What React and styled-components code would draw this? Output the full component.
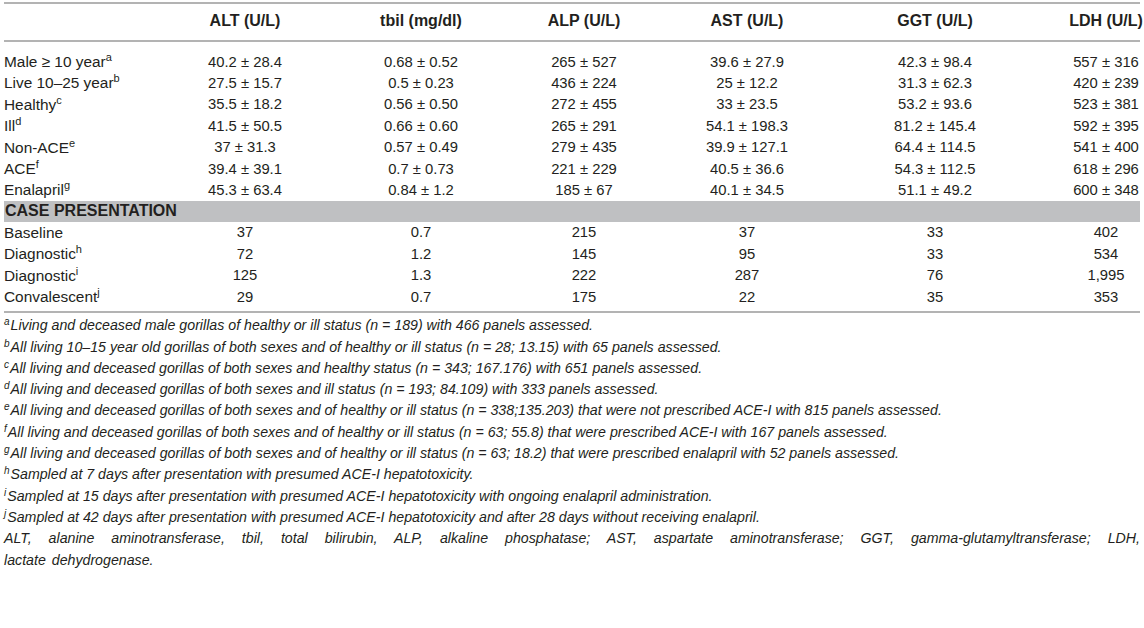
import React from "react";
import styled, { createGlobalStyle } from "styled-components";

const Global = createGlobalStyle`
  html, body { margin: 0; padding: 0; background: #ffffff; }
  body { font-family: "Liberation Sans", Arial, sans-serif; color: #231f20; }
`;

const Page = styled.div`
  width: 1144px;
  padding: 2px 4px 0 4px;
  box-sizing: border-box;
`;

const Table = styled.div`
  display: grid;
  grid-template-columns: 116px 250px 102px 224px 102px 274px 68px;
  border-top: 2px solid #b3b3b3;
  border-bottom: 2px solid #b3b3b3;
  padding-bottom: 4px;
`;

const HeadRow = styled.div`
  display: contents;
`;

const HeadCell = styled.div`
  height: 38px;
  box-sizing: border-box;
  padding-bottom: 2px;
  display: flex;
  align-items: center;
  justify-content: center;
  white-space: nowrap;
  font-weight: bold;
  font-size: 16px;
  border-bottom: 2px solid #b3b3b3;
  margin-bottom: 9px;
`;

const Cell = styled.div`
  height: 21.4px;
  display: flex;
  align-items: center;
  justify-content: ${(p) => (p.$label ? "flex-start" : "center")};
  white-space: nowrap;
  font-size: ${(p) => (p.$label ? "15.4px" : "14.8px")};
`;

const LabelText = styled.span`
  line-height: 1;
`;

const Section = styled.div`
  grid-column: 1 / -1;
  background: #bfc0c2;
  height: 21px;
  display: flex;
  align-items: center;
  padding-left: 1px;
  font-weight: bold;
  font-size: 16px;
`;

const Sup = styled.sup`
  font-size: ${(p) => (p.$small ? "10px" : "11px")};
  line-height: 0;
  vertical-align: ${(p) => (p.$small ? "5px" : "6px")};
  font-style: ${(p) => (p.$small ? "italic" : "normal")};
  margin-right: ${(p) => (p.$small ? "1px" : "0")};
`;

const Notes = styled.div`
  padding-top: 2px;
  font-style: italic;
  font-size: 14.2px;
  line-height: 21.3px;
`;

const Note = styled.div`
  white-space: nowrap;
`;

const Abbrev = styled.div`
  text-align: justify;
  width: 1136px;
  word-spacing: 2px;
`;

const Keep = styled.span`
  white-space: nowrap;
`;

const cols = ["ALT (U/L)", "tbil (mg/dl)", "ALP (U/L)", "AST (U/L)", "GGT (U/L)", "LDH (U/L)"];

const pm = " \u00b1 ";

const groups = [
  ["Male \u2265 10 year", "a", ["40.2" + pm + "28.4", "0.68" + pm + "0.52", "265" + pm + "527", "39.6" + pm + "27.9", "42.3" + pm + "98.4", "557" + pm + "316"]],
  ["Live 10\u201325 year", "b", ["27.5" + pm + "15.7", "0.5" + pm + "0.23", "436" + pm + "224", "25" + pm + "12.2", "31.3" + pm + "62.3", "420" + pm + "239"]],
  ["Healthy", "c", ["35.5" + pm + "18.2", "0.56" + pm + "0.50", "272" + pm + "455", "33" + pm + "23.5", "53.2" + pm + "93.6", "523" + pm + "381"]],
  ["Ill", "d", ["41.5" + pm + "50.5", "0.66" + pm + "0.60", "265" + pm + "291", "54.1" + pm + "198.3", "81.2" + pm + "145.4", "592" + pm + "395"]],
  ["Non-ACE", "e", ["37" + pm + "31.3", "0.57" + pm + "0.49", "279" + pm + "435", "39.9" + pm + "127.1", "64.4" + pm + "114.5", "541" + pm + "400"]],
  ["ACE", "f", ["39.4" + pm + "39.1", "0.7" + pm + "0.73", "221" + pm + "229", "40.5" + pm + "36.6", "54.3" + pm + "112.5", "618" + pm + "296"]],
  ["Enalapril", "g", ["45.3" + pm + "63.4", "0.84" + pm + "1.2", "185" + pm + "67", "40.1" + pm + "34.5", "51.1" + pm + "49.2", "600" + pm + "348"]],
];

const cases = [
  ["Baseline", "", ["37", "0.7", "215", "37", "33", "402"]],
  ["Diagnostic", "h", ["72", "1.2", "145", "95", "33", "534"]],
  ["Diagnostic", "i", ["125", "1.3", "222", "287", "76", "1,995"]],
  ["Convalescent", "j", ["29", "0.7", "175", "22", "35", "353"]],
];

const notes = [
  ["a", "Living and deceased male gorillas of healthy or ill status (n = 189) with 466 panels assessed."],
  ["b", "All living 10\u201315 year old gorillas of both sexes and of healthy or ill status (n = 28; 13.15) with 65 panels assessed."],
  ["c", "All living and deceased gorillas of both sexes and healthy status (n = 343; 167.176) with 651 panels assessed."],
  ["d", "All living and deceased gorillas of both sexes and ill status (n = 193; 84.109) with 333 panels assessed."],
  ["e", "All living and deceased gorillas of both sexes and of healthy or ill status (n = 338;135.203) that were not prescribed ACE-I with 815 panels assessed."],
  ["f", "All living and deceased gorillas of both sexes and of healthy or ill status (n = 63; 55.8) that were prescribed ACE-I with 167 panels assessed."],
  ["g", "All living and deceased gorillas of both sexes and of healthy or ill status (n = 63; 18.2) that were prescribed enalapril with 52 panels assessed."],
  ["h", "Sampled at 7 days after presentation with presumed ACE-I hepatotoxicity."],
  ["i", "Sampled at 15 days after presentation with presumed ACE-I hepatotoxicity with ongoing enalapril administration."],
  ["j", "Sampled at 42 days after presentation with presumed ACE-I hepatotoxicity and after 28 days without receiving enalapril."],
];

function Row({ label, sup, values }) {
  return (
    <>
      <Cell $label>
        <LabelText>
          {label}
          {sup && <Sup>{sup}</Sup>}
        </LabelText>
      </Cell>
      {values.map((v, i) => (
        <Cell key={i}>{v}</Cell>
      ))}
    </>
  );
}

export default function App() {
  return (
    <Page>
      <Global />
      <Table>
        <HeadRow>
          <HeadCell />
          {cols.map((c) => (
            <HeadCell key={c}>{c}</HeadCell>
          ))}
        </HeadRow>
        {groups.map(([l, s, v], i) => (
          <Row key={"g" + i} label={l} sup={s} values={v} />
        ))}
        <Section>CASE PRESENTATION</Section>
        {cases.map(([l, s, v], i) => (
          <Row key={"c" + i} label={l} sup={s} values={v} />
        ))}
      </Table>
      <Notes>
        {notes.map(([s, t]) => (
          <Note key={s}>
            <Sup $small>{s}</Sup>
            {t}
          </Note>
        ))}
        <Abbrev>
          ALT, alanine aminotransferase, tbil, total bilirubin, ALP, alkaline phosphatase; AST, aspartate
          aminotransferase; GGT, gamma-glutamyltransferase; LDH, <Keep>lactate dehydrogenase.</Keep>
        </Abbrev>
      </Notes>
    </Page>
  );
}
